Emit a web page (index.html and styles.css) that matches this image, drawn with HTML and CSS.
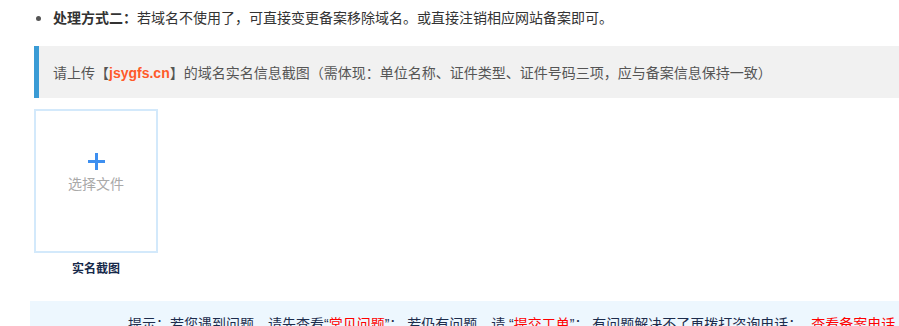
FILE: index.html
```html
<!DOCTYPE html>
<html lang="zh-CN">
  <head>
    <meta charset="UTF-8" />
    <meta name="viewport" content="width=device-width, initial-scale=1.0" />
    <title>备案信息 | 上传截图</title>
    <link rel="stylesheet" href="styles.css">
  </head>
  <body>
    <div class="main">
      <ul class="notes">
        <li><b>处理方式二：</b>若域名不使用了，可直接变更备案移除域名。或直接注销相应网站备案即可。</li>
      </ul>

      <div class="uploadTip">
        请上传【<span class="domain">jsygfs.cn</span>】的域名实名信息截图（需体现：单位名称、证件类型、证件号码三项，应与备案信息保持一致）
      </div>

      <div class="uploadItem">
        <div class="uploadBox">
          <span class="plus"></span>
          <span class="pick">选择文件</span>
        </div>
        <div class="uploadLabel">实名截图</div>
      </div>
    </div>

    <div class="helpBar">
      提示：若您遇到问题，请先查看“<a href="#">常见问题</a>”； 若仍有问题，请 “<a href="#">提交工单</a>”； 有问题解决不了再拨打咨询电话： <a href="#" class="phone">查看备案电话</a>
    </div>
  </body>
</html>
```

FILE: styles.css
```css
html,
body {
  margin: 0;
  padding: 0;
  background: #fff;
  font-family: "Microsoft YaHei", "Noto Sans CJK SC", sans-serif;
  font-size: 14px;
  color: #333;
  overflow: hidden;
}

.main {
  padding-left: 34px;
}

.notes {
  margin: 6px 0 0;
  padding-left: 19px;
  line-height: 22px;
  white-space: nowrap;
}
.notes li::marker {
  color: #555;
}
.notes b {
  color: #333;
}

.uploadTip {
  margin-top: 18px;
  height: 52px;
  line-height: 52px;
  padding-left: 14px;
  border-left: 5px solid #3a9bd5;
  background-color: #f1f1f1;
  color: #555;
  white-space: nowrap;
}
.domain {
  color: #ff5a2a;
  font-weight: bold;
  font-family: "Liberation Sans", "Noto Sans CJK SC", sans-serif;
}

.uploadItem {
  width: 124px;
  margin-top: 11px;
}
.uploadBox {
  box-sizing: border-box;
  width: 124px;
  height: 144px;
  border: 2px solid #d3e9fb;
  padding-top: 42px;
  display: flex;
  flex-direction: column;
  align-items: center;
  cursor: pointer;
}
.plus {
  position: relative;
  width: 17px;
  height: 17px;
}
.plus::before,
.plus::after {
  content: "";
  position: absolute;
  background: #3d8ff0;
}
.plus::before {
  left: 0;
  right: 0;
  top: 7px;
  height: 3px;
}
.plus::after {
  top: 0;
  bottom: 0;
  left: 7px;
  width: 3px;
}
.pick {
  margin-top: 3px;
  line-height: 20px;
  color: #a9a9a9;
}
.uploadLabel {
  margin-top: 7px;
  text-align: center;
  font-size: 12px;
  font-weight: bold;
  line-height: 16px;
  color: #16294a;
}

.helpBar {
  margin: 25px 0 0 30px;
  padding: 12px 0 12px 98px;
  line-height: 22px;
  background-color: #edf7fe;
  color: #1c2c4c;
  font-family: "Liberation Sans", "Noto Sans CJK SC", sans-serif;
  white-space: nowrap;
}
.helpBar a {
  color: #f00;
  text-decoration: none;
}
.helpBar .phone {
  margin-left: 5px;
}
```
